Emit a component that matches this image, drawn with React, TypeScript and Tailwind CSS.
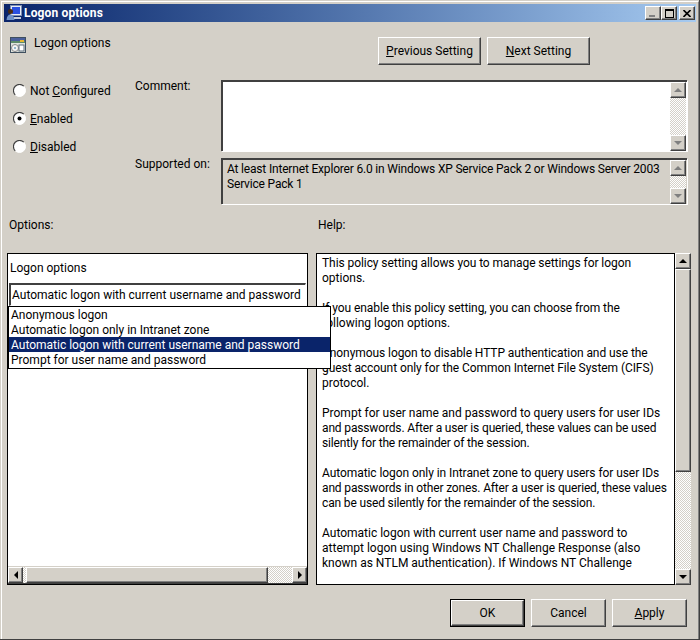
import React from "react";

const font = { fontFamily: 'Roboto, "Noto Sans", sans-serif' };

const Raised = "border border-[#404040] border-t-white border-l-white shadow-[inset_-1px_-1px_0_#808080]";

function Arrow({ dir, color = "#000" }: { dir: "up" | "down" | "left" | "right"; color?: string }) {
  const pts = { up: "4,0 0,4 8,4", down: "0,0 8,0 4,4", left: "4,0 4,8 0,4", right: "0,0 4,4 0,8" }[dir];
  const horizontal = dir === "up" || dir === "down";
  return (
    <svg width={horizontal ? 8 : 4} height={horizontal ? 4 : 8} viewBox={horizontal ? "0 0 8 4" : "0 0 4 8"}>
      <polygon points={pts} fill={color} />
    </svg>
  );
}

function ScrollBtn({ dir, color }: { dir: "up" | "down" | "left" | "right"; color?: string }) {
  const horizontal = dir === "left" || dir === "right";
  return (
    <div className={`${horizontal ? "w-[15px]" : "w-[16px]"} h-[16px] shrink-0 flex items-center justify-center bg-[#d4d0c8] ${Raised}`}>
      <Arrow dir={dir} color={color} />
    </div>
  );
}

const Dither = "bg-[repeating-conic-gradient(#d4d0c8_0_25%,#ffffff_0_50%)] bg-[length:2px_2px]";

function DisabledVBar({ className = "" }: { className?: string }) {
  return (
    <div className={`w-[16px] flex flex-col ${className}`}>
      <ScrollBtn dir="up" color="#808080" />
      <div className={`flex-1 ${Dither}`} />
      <ScrollBtn dir="down" color="#808080" />
    </div>
  );
}

function Radio({ checked, children }: { checked?: boolean; children: React.ReactNode }) {
  return (
    <div className="h-[28px] flex items-center">
      <svg width="13" height="13" viewBox="0 0 13 13" className="mr-[4px] ml-[12px] mt-[-2px]">
        <circle cx="6.5" cy="6.5" r="6" fill="#fff" stroke="#ffffff" />
        <path d="M2.2 10.8 A6 6 0 0 1 10.8 2.2" fill="none" stroke="#404040" strokeWidth="1.2" />
        {checked && <circle cx="6.5" cy="6.5" r="2" fill="#000" />}
      </svg>
      <span>{children}</span>
    </div>
  );
}

function PushButton({ children, className = "" }: { children: React.ReactNode; className?: string }) {
  return (
    <div className={`flex items-center justify-center bg-[#d4d0c8] ${Raised} ${className}`}>
      <span>{children}</span>
    </div>
  );
}

const helpLines: [string, number][] = [
  ["This policy setting allows you to manage settings for logon", 1],
  ["options.", 0],
  ["", 0],
  ["If you enable this policy setting, you can choose from the", 1],
  ["following logon options.", 0],
  ["", 0],
  ["Anonymous logon to disable HTTP authentication and use the", 1],
  ["guest account only for the Common Internet File System (CIFS)", 1],
  ["protocol.", 0],
  ["", 0],
  ["Prompt for user name and password to query users for user IDs", 0],
  ["and passwords. After a user is queried, these values can be used", 2],
  ["silently for the remainder of the session.", 2],
  ["", 0],
  ["Automatic logon only in Intranet zone to query users for user IDs", 1],
  ["and passwords in other zones. After a user is queried, these values", 2],
  ["can be used silently for the remainder of the session.", 2],
  ["", 0],
  ["Automatic logon with current user name and password to", 0],
  ["attempt logon using Windows NT Challenge Response (also", 0],
  ["known as NTLM authentication). If Windows NT Challenge", 0],
];

const tightness = ["tracking-normal", "tracking-[-0.07px]", "tracking-[-0.15px]"];

export default function App() {
  return (
    <div
      style={font}
      className="relative w-[700px] h-[640px] overflow-hidden bg-[#d4d0c8] text-[12px] leading-[15px] text-black border-r border-b border-[#404040] border-t-0 border-l-0"
    >
      <div className="h-full border-t border-l border-white border-r border-b border-r-[#808080] border-b-[#808080] ml-px mt-px flex flex-col">
        {/* Title bar */}
        <div className="mx-[2px] mt-[2px] h-[18px] flex items-center bg-gradient-to-r from-[#0a246a] to-[#a6caf0]">
          <svg width="16" height="16" viewBox="0 0 16 16" className="ml-[2px] mr-[2px] shrink-0">
            <rect x="4.5" y="0.5" width="11" height="10" fill="#e8ecf5" stroke="#7f8fb0" />
            <rect x="6" y="2" width="8" height="7" fill="#2a50e0" />
            <circle cx="4.5" cy="6.5" r="2.5" fill="#4a2c14" />
            <path d="M0.5 15 Q1 9.5 4.5 9.5 Q8 9.5 8.5 15 Z" fill="#6f92c8" />
            <rect x="8" y="12" width="7" height="2" fill="#c7cfdd" />
          </svg>
          <span className="text-white font-bold text-[12px] tracking-[0.15px] flex-1 pt-px">Logon options</span>
          <div className="flex items-center mr-[1px]">
            <div className={`w-[16px] h-[14px] bg-[#d4d0c8] flex items-end justify-start pl-[3px] pb-[2px] ${Raised}`}>
              <div className="w-[6px] h-[2px] bg-[#808080]" />
            </div>
            <div className={`w-[16px] h-[14px] bg-[#d4d0c8] flex items-center justify-center ${Raised}`}>
              <div className="w-[9px] h-[9px] border border-t-2 border-black" />
            </div>
            <div className={`ml-[2px] w-[16px] h-[14px] bg-[#d4d0c8] flex items-center justify-center ${Raised}`}>
              <svg width="8" height="7" viewBox="0 0 8 7">
                <path d="M0.5 0 L7.5 7 M7.5 0 L0.5 7" stroke="#000" strokeWidth="1.6" />
              </svg>
            </div>
          </div>
        </div>

        {/* Header row */}
        <div className="flex items-start mt-[15px] h-[29px]">
          <svg width="16" height="16" viewBox="0 0 16 16" className="ml-[8px] shrink-0">
            <rect x="0.5" y="0.5" width="15" height="15" fill="#dfe4de" stroke="#3f4f5f" />
            <rect x="1" y="1" width="14" height="3" fill="#4a5f9c" />
            <rect x="1" y="4" width="14" height="2" fill="#5c8a6a" />
            <rect x="10" y="3" width="4" height="2" fill="#e8b830" />
            <circle cx="5" cy="11" r="3.5" fill="#f4f4f4" stroke="#8a8a8a" />
            <circle cx="5" cy="11" r="1" fill="#70a0c0" />
            <rect x="9" y="8" width="5" height="6" fill="#fff" stroke="#5c6c7c" />
          </svg>
          <span className="ml-[8px] mt-[-1px] w-[344px]">Logon options</span>
          <div className="flex gap-[6px]">
            <PushButton className="w-[103px] h-[28px]">
              <u>P</u>revious Setting
            </PushButton>
            <PushButton className="w-[103px] h-[28px]">
              <u>N</u>ext Setting
            </PushButton>
          </div>
        </div>

        {/* Radios, comment, supported */}
        <div className="flex mt-[14px] h-[125px]">
          <div className="w-[134px] mt-[-3px] -ml-px">
            <Radio>
              Not <u>C</u>onfigured
            </Radio>
            <Radio checked>
              <u>E</u>nabled
            </Radio>
            <Radio>
              <u>D</u>isabled
            </Radio>
          </div>
          <div className="flex flex-col">
            <div className="flex h-[71px]">
              <span className="w-[86px] mt-[-1px]">Comment:</span>
              <div className="w-[466px] border-2 border-[#404040] border-r-0 border-b-0 shadow-[1px_1px_0_#fff] bg-white flex justify-end">
                <DisabledVBar className="mr-px" />
              </div>
            </div>
            <div className="flex h-[46px] mt-[7px]">
              <span className="w-[86px] mt-[-1px]">Supported on:</span>
              <div className="w-[466px] border-2 border-[#404040] border-r-0 border-b-0 shadow-[1px_1px_0_#fff] flex justify-between">
                <div className="pl-[4px] pt-[2px] whitespace-nowrap tracking-[-0.18px]">
                  At least Internet Explorer 6.0 in Windows XP Service Pack 2 or Windows Server 2003
                  <br />
                  Service Pack 1
                </div>
                <DisabledVBar className="mr-px" />
              </div>
            </div>
          </div>
        </div>

        {/* Labels */}
        <div className="flex mt-[13px] h-[15px]">
          <span className="ml-[7px] w-[309px]">Options:</span>
          <span>Help:</span>
        </div>

        {/* Panels */}
        <div className="flex mt-[20px] h-[332px] ml-[5px]">
          <div className="relative w-[301px] border border-black bg-white flex flex-col">
            <div className="h-[29px] pl-[2px] flex items-center">Logon options</div>
            <div className="mx-px h-[23px] border-2 border-[#404040] border-r-white border-b-white border-r border-b flex items-center pl-[1px] whitespace-nowrap">
              Automatic logon with current username and password
            </div>
            <div className="flex-1" />
            <div className="flex items-center h-[16px] bg-[#d4d0c8] shadow-[0_-1px_0_#d4d0c8]">
              <ScrollBtn dir="left" />
              <div className={`w-[3px] h-full ${Dither}`} />
              <div className={`w-[242px] h-full bg-[#d4d0c8] ${Raised}`} />
              <div className={`flex-1 h-full ${Dither}`} />
              <ScrollBtn dir="right" />
            </div>
            <div className="h-[1px] bg-[#404040]" />
            <div className="absolute left-0 top-[52px] w-[323px] h-[63px] border border-black bg-white z-10">
              <div className="h-[15px] pl-[2px] pt-px">Anonymous logon</div>
              <div className="h-[15px] pl-[2px] pt-px">Automatic logon only in Intranet zone</div>
              <div className="h-[15px] pl-[2px] pt-px bg-[#0a246a] text-white">Automatic logon with current username and password</div>
              <div className="h-[15px] pl-[2px] pt-px">Prompt for user name and password</div>
            </div>
          </div>
          <div className="ml-[8px] w-[359px] border border-black bg-white pl-[5px] pt-[2px] overflow-hidden">
            {helpLines.map(([l, t], i) => (
              <div key={i} className={`h-[15px] whitespace-nowrap ${tightness[t]}`}>
                {l}
              </div>
            ))}
          </div>
          <div className="w-[16px] flex flex-col bg-[#d4d0c8]">
            <ScrollBtn dir="up" />
            <div className={`w-[16px] h-[203px] bg-[#d4d0c8] ${Raised}`} />
            <div className={`flex-1 ${Dither}`} />
            <ScrollBtn dir="down" />
          </div>
        </div>

        {/* Footer */}
        <div className="flex justify-end gap-[6px] mt-[14px] mr-[11px]">
          <div className="border border-black">
            <PushButton className="w-[73px] h-[26px]">OK</PushButton>
          </div>
          <PushButton className="w-[75px] h-[28px]">Cancel</PushButton>
          <PushButton className="w-[75px] h-[28px]">
            <u>A</u>pply
          </PushButton>
        </div>
      </div>
    </div>
  );
}
